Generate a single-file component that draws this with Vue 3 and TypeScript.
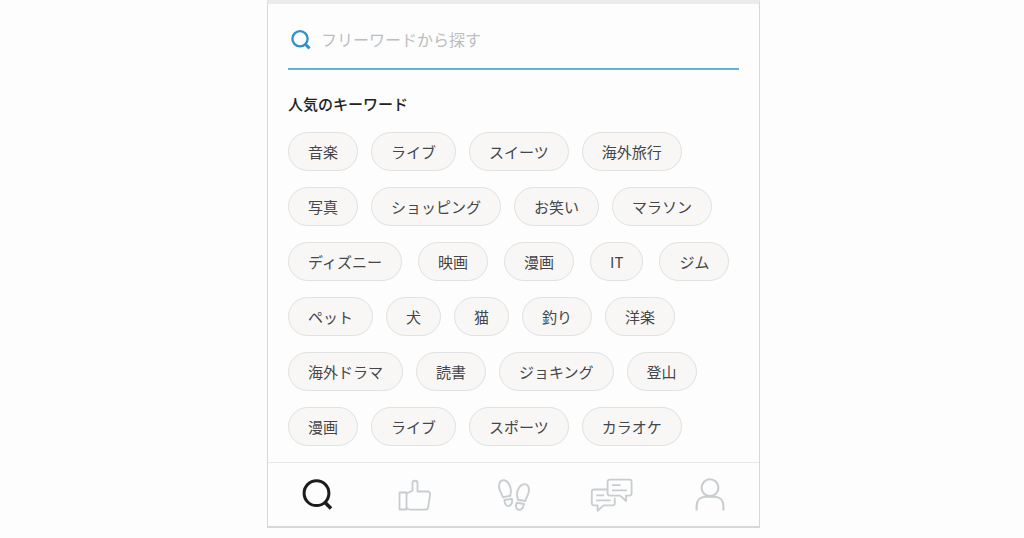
<script setup lang="ts">
import { ref } from 'vue'

interface KeywordRow {
  words: string[]
  wide?: boolean
}

const query = ref('')

const rows: KeywordRow[] = [
  { words: ['音楽', 'ライブ', 'スイーツ', '海外旅行'] },
  { words: ['写真', 'ショッピング', 'お笑い', 'マラソン'] },
  { words: ['ディズニー', '映画', '漫画', 'IT', 'ジム'], wide: true },
  { words: ['ペット', '犬', '猫', '釣り', '洋楽'] },
  { words: ['海外ドラマ', '読書', 'ジョキング', '登山'] },
  { words: ['漫画', 'ライブ', 'スポーツ', 'カラオケ'] },
]
</script>

<template>
  <div class="page">
    <main class="panel">
      <form class="search" role="search" @submit.prevent>
        <label class="search-label" for="free-word" aria-label="フリーワード">
          <svg width="20" height="20" viewBox="0 0 20 20" fill="none" stroke="currentColor">
            <circle cx="9" cy="8.8" r="7.6" stroke-width="2.3" />
            <path d="M14 14 18.6 18.4" stroke-width="3" />
          </svg>
        </label>
        <input id="free-word" v-model="query" class="search-input" type="text" placeholder="フリーワードから探す" />
      </form>

      <section class="keywords">
        <h2 class="heading">人気のキーワード</h2>
        <div class="rows">
          <div v-for="(row, i) in rows" :key="i" class="row" :class="{ wide: row.wide }">
            <button v-for="word in row.words" :key="word" class="pill" type="button" @click="query = word">{{ word }}</button>
          </div>
        </div>
      </section>

      <nav class="tabs">
        <a class="tab active" href="#search" aria-label="探す">
          <svg width="44" height="40" viewBox="0 0 44 40" fill="none" stroke="currentColor">
            <circle cx="21.5" cy="18.2" r="12.4" stroke-width="3" />
            <path d="M29.8 27.2 36 33.6" stroke-width="3.6" />
          </svg>
        </a>
        <a class="tab" href="#likes" aria-label="いいね">
          <svg width="44" height="40" viewBox="0 0 44 40" fill="none" stroke="currentColor" stroke-width="1.8" stroke-linejoin="round">
            <path d="M6.5 17.5H13.5V34.5H6.5Z" />
            <path d="M13.5 18.5 19.5 15.8V8C19.5 5 24.5 5 24.5 8V16.5H34.5C36.2 16.5 37.4 17.8 37.1 19.5L35.2 32.2C35 33.7 34 34.6 32.5 34.6H17.5C15.8 34.6 14.8 34 13.5 32.8" />
          </svg>
        </a>
        <a class="tab" href="#footprints" aria-label="足あと">
          <svg width="44" height="40" viewBox="0 0 44 40" fill="none" stroke="currentColor" stroke-width="1.9" stroke-linejoin="round">
            <path d="M10.8 22.2C10.2 18.8 6.8 15.7 7 11.2C7.2 7.6 9 5.4 11.6 5.3C15.8 5.2 19.2 11.4 18.9 16.4C18.8 18.3 18.2 19.4 18.4 20.8Z" />
            <path d="M12.4 25 19.8 23.8C20.7 27 19.7 30.5 16.7 31C13.7 31.4 12.7 28.2 12.4 25Z" />
            <path d="M33.4 26C34 22.6 37.2 19.3 37 14.8C36.8 11.4 35.2 9.2 32.6 9.1C28.4 9 24.9 14.6 25 19.7C25.1 21.8 26 23 25.7 24.7Z" />
            <path d="M32 29 24.8 27.7C23.2 30.7 23.9 34.4 27 34.9C30.2 35.3 31.4 32 32 29Z" />
          </svg>
        </a>
        <a class="tab" href="#messages" aria-label="メッセージ">
          <svg width="44" height="40" viewBox="0 0 44 40" fill="none" stroke="currentColor" stroke-width="1.8" stroke-linejoin="round">
            <path d="M17.5 14.5H4.2C2.7 14.5 1.8 15.3 1.8 16.6V28.3C1.8 29.6 2.7 30.4 4.2 30.4H7.6V35.8L13.6 30.4H22.5C24 30.4 24.8 29.6 24.8 28.3V22.8" />
            <path d="M19.9 4.7H39.3C40.8 4.7 41.6 5.5 41.6 6.8V18.6C41.6 19.9 40.8 20.7 39.3 20.7H36V26L30 20.7H19.9C18.4 20.7 17.6 19.9 17.6 18.6V6.8C17.6 5.5 18.4 4.7 19.9 4.7Z" />
            <path d="M22 10.2H30.5M22 15.4H37M6.2 20.4H14M6.2 25.4H20.6" />
          </svg>
        </a>
        <a class="tab" href="#profile" aria-label="マイページ">
          <svg width="44" height="40" viewBox="0 0 44 40" fill="none" stroke="currentColor" stroke-width="2.1">
            <circle cx="22" cy="12.7" r="8.4" />
            <path d="M8.6 35.6V31C8.6 25.5 12.2 21.7 18 21.7H26C31.8 21.7 35.4 25.5 35.4 31V35.6" />
          </svg>
        </a>
      </nav>
    </main>
  </div>
</template>

<style>
body {
  margin: 0;
  background: #fdfdfd;
}
</style>

<style scoped>
.page {
  box-sizing: border-box;
  padding: 0 0 10px 3px;
  font-family: "Noto Sans CJK JP", sans-serif;
  color: #444648;
}

.panel {
  box-sizing: border-box;
  max-width: 493px;
  margin: 0 auto;
  border: 1px solid #d8d8d9;
  border-top: 4px solid #ebebeb;
  border-bottom-width: 2px;
}

.search {
  display: flex;
  align-items: center;
  gap: 10px;
  margin: 0 20px;
  padding: 20px 0 12px 3px;
  border-bottom: 2px solid #68aedb;
}

.search-label {
  display: flex;
  color: #3190cb;
}

.search-input {
  box-sizing: border-box;
  flex: 1;
  min-width: 0;
  height: 32px;
  padding: 0 0 2px;
  border: 0;
  outline: 0;
  background: transparent;
  font: 16px/24px "Noto Sans CJK JP", sans-serif;
  color: #444648;
}

.search-input::placeholder {
  color: #bbbdc0;
  opacity: 1;
}

.keywords {
  padding: 22px 20px 16px;
}

.heading {
  margin: 0 0 16px;
  font-size: 15px;
  font-weight: 500;
  line-height: 24px;
  color: #222;
}

.rows {
  display: flex;
  flex-direction: column;
  gap: 16px;
}

.row {
  display: flex;
  flex-wrap: wrap;
  gap: 13px;
}

.row.wide {
  gap: 16px;
}

.pill {
  height: 39px;
  padding: 0 19px;
  border: 1px solid #e0e1e2;
  border-radius: 20px;
  background: #f8f7f6;
  font: 15px/24px "Noto Sans CJK JP", sans-serif;
  color: inherit;
  cursor: pointer;
}

.tabs {
  display: flex;
  border-top: 1px solid #e8e8e9;
}

.tab {
  flex: 1;
  display: flex;
  justify-content: center;
  padding: 12px 0 11px;
  color: #c8cdd0;
}

.tab.active {
  color: #1c1c1c;
}
</style>
